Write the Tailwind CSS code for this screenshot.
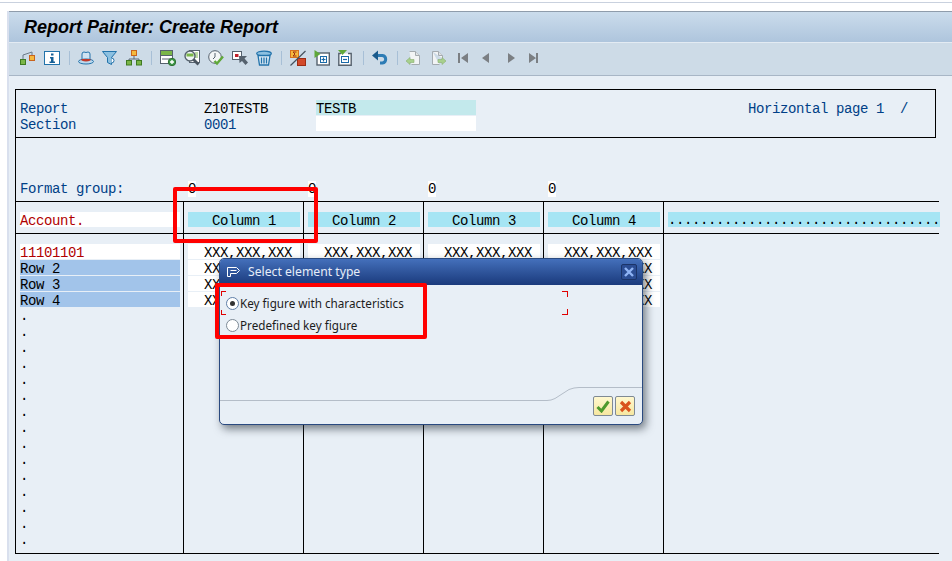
<!DOCTYPE html>
<html>
<head>
  <title>Report Painter: Create Report</title>
  <script src="https://cdn.jsdelivr.net/npm/@tailwindcss/browser@4"></script>
</head>
<body class="bg-white w-[952px] h-[561px] overflow-hidden relative font-['Liberation_Mono',monospace] text-[14px] tracking-[-0.4px] leading-[16px]">
  <!-- browser strip above the SAP window -->
  <div class="h-[11px] border-t border-[#c9d1de] mt-[2px] -mb-[2px]"></div>

  <div class="ml-[7px] h-[550px] border-l-2 border-[#d9e0ee] bg-[#e8eff6] flex flex-col">
    <!-- title bar -->
    <div class="h-[32px] border-t border-[#8f9cab] border-b border-b-[#e3ebf3] bg-gradient-to-b from-[#cbdcec] to-[#aec5dd] pl-[15px] flex items-center">
      <h1 class="font-['Liberation_Sans',sans-serif] font-bold italic text-[18px] tracking-normal text-black">Report Painter: Create Report</h1>
    </div>

    <!-- toolbar -->
    <div class="h-[33px] bg-[#cddbe7] border-b border-[#a8b6c6] pl-[11px] pb-[3px] flex items-center gap-2">
      <svg class="w-4 h-4" viewBox="0 0 16 16"><path d="M3 9V5l9-3v4" fill="none" stroke="#6b7a88"/><rect x=".5" y="9.500" width="5" height="5" fill="#7ab648" stroke="#3f7a22"/><rect x="9.500" y="5.500" width="5" height="5" fill="#f5b93c" stroke="#c8641e"/></svg>
      <svg class="w-4 h-4" viewBox="0 0 16 16"><rect x=".5" y="1.500" width="15" height="13" fill="#fff" stroke="#2273ab"/><path d="M7 3.500h2.500v2H7zM6 7h3.500v4.500H11V13H5.500v-1.500H7V8.500H6z" fill="#155f96"/></svg>
      <span class="ml-px w-px h-[14px] bg-[#a7bfd6]"></span>
      <svg class="w-4 h-4" viewBox="0 0 16 16"><path d="M4 10V4q0-2 2-2 2 1 4 0 2 0 2 2v6z" fill="#cfe3f2" stroke="#2273ab"/><ellipse cx="8" cy="11.500" rx="7.500" ry="2.500" fill="#bcd9ee" stroke="#2273ab"/><path d="M3.500 10.500q4.500 2 9 0v-1.500h-9z" fill="#c0392b"/></svg>
      <svg class="w-4 h-4" viewBox="0 0 16 16"><path d="M.5 1.500h14l-5 6v7l-4-2v-5z" fill="#8cc0e0" stroke="#2273ab"/><path d="M9.500 8a2.500 2.500 0 1 1 0 5" fill="#fff" stroke="#2273ab"/></svg>
      <svg class="w-4 h-4" viewBox="0 0 16 16"><path d="M8 6v3M3 11V9h10v2" fill="none" stroke="#5d6b78"/><rect x="5.500" y=".5" width="5" height="5" fill="#f5b93c" stroke="#c8641e"/><rect x=".5" y="10.500" width="5" height="4.500" fill="#7ab648" stroke="#3f7a22"/><rect x="10.500" y="10.500" width="5" height="4.500" fill="#7ab648" stroke="#3f7a22"/></svg>
      <span class="ml-px w-px h-[14px] bg-[#a7bfd6]"></span>
      <svg class="w-4 h-4" viewBox="0 0 16 16"><rect x=".5" y=".5" width="12" height="13" fill="#fff" stroke="#56626e"/><rect x="1" y="1" width="11" height="4" fill="#7ab648"/><path d="M1 5.500h11M2 9h8" stroke="#56626e"/><circle cx="12" cy="12" r="3.700" fill="#3f9a4a" stroke="#2f6e32"/><path d="M10 12h4M12 10v4" stroke="#fff" stroke-width="1.400"/></svg>
      <svg class="w-4 h-4" viewBox="0 0 16 16"><rect x="5.500" y=".5" width="10" height="12" fill="#fff" stroke="#56626e"/><path d="M11 3h3M11 5h3M11 7h3" stroke="#7ab648"/><circle cx="6" cy="6" r="5" fill="#eef3f5" stroke="#56626e" stroke-width="1.400"/><path d="M2.500 5h7" stroke="#7ab648" stroke-width="3"/><path d="M9.500 9.500l5 5" stroke="#4a5560" stroke-width="2.800"/></svg>
      <svg class="w-4 h-4" viewBox="0 0 16 16"><circle cx="7" cy="7" r="6.300" fill="#f4f6f7" stroke="#56626e"/><path d="M7 3v4l-2 2" fill="none" stroke="#56626e"/><path d="M6.500 11l2.500 2.500 6-7" fill="none" stroke="#5fa83a" stroke-width="2.400"/></svg>
      <svg class="w-4 h-4" viewBox="0 0 16 16"><rect x=".5" y="1.500" width="9" height="8" fill="#fff" stroke="#56626e"/><rect x="3" y="4" width="3.500" height="3" fill="#c0202a"/><path d="M7 6h8l-2.500 2.500 3.500 4-2.500 2.500-3.500-4L7.500 13z" fill="#56626e"/></svg>
      <svg class="w-4 h-4" viewBox="0 0 16 16"><ellipse cx="8" cy="3.500" rx="7.300" ry="2.300" fill="#8cc0e0" stroke="#2273ab" stroke-width="1.300"/><path d="M2 5.500l1.500 9.500h9L14 5.500z" fill="#dcebf5" stroke="#2273ab" stroke-width="1.300"/><path d="M5.500 7.500v6M8 7.500v6M10.500 7.500v6" stroke="#2273ab" stroke-width="1.300"/></svg>
      <span class="ml-px w-px h-[14px] bg-[#a7bfd6]"></span>
      <svg class="w-4 h-4" viewBox="0 0 16 16"><rect x=".5" y=".5" width="8" height="7" fill="#f5b93c" stroke="#d8701e"/><rect x="7.500" y="8.500" width="8" height="7" fill="#d2492a" stroke="#9c2c14"/><path d="M.5 15.500L15.500 1" stroke="#46525e" stroke-width="1.200"/><path d="M6.500 2H3l2 2-2 2h3.500" fill="none" stroke="#9c2c14"/></svg>
      <svg class="w-4 h-4" viewBox="0 0 16 16"><rect x="3" y="3" width="12.300" height="12" fill="#fff" stroke="#56626e" stroke-width="1.400"/><path d="M.5 0l6 4-6 4z" fill="#5fa83a"/><rect x="6.500" y="6.500" width="6" height="6" fill="#fff" stroke="#1a6aa8"/><path d="M7.500 9.500h4M9.500 7.500v4" stroke="#1a6aa8" stroke-width="1.200"/></svg>
      <svg class="w-4 h-4" viewBox="0 0 16 16"><path d="M3 3.500H.8v11.700h12.400V3.500H10" fill="#fff" stroke="#56626e" stroke-width="1.400"/><path d="M0 0h9L4.500 5z" fill="#5fa83a"/><rect x="3.500" y="6.500" width="7" height="6" fill="#fff" stroke="#1a6aa8"/><path d="M5 9.500h4" stroke="#1a6aa8" stroke-width="1.200"/></svg>
      <span class="ml-px w-px h-[14px] bg-[#a7bfd6]"></span>
      <svg class="w-4 h-4" viewBox="0 0 16 16"><path d="M4 5.500h6.500a3.800 3.800 0 0 1 0 7.500H8" fill="none" stroke="#2d7cb5" stroke-width="3"/><path d="M0 5.500L6 .5v10z" fill="#1a5a8c"/></svg>
      <span class="ml-px w-px h-[14px] bg-[#a7bfd6]"></span>
      <svg class="w-4 h-4" viewBox="0 0 16 16"><path d="M3.500 1.500h6l4 4v9h-8" fill="#f2f4f5" stroke="#a4abb0"/><path d="M9.500 1.500v4h4" fill="#dfe3e5" stroke="#a4abb0"/><path d="M0 11l4-3.500V9.500h4v3H4v2z" fill="#a8d08d" stroke="#8ab070" stroke-width=".6"/></svg>
      <svg class="w-4 h-4 ml-px" viewBox="0 0 16 16"><path d="M1.500 1.500h6l4 4v3M1.500 1.500v13h7" fill="#f2f4f5" stroke="#a4abb0"/><path d="M7.500 1.500v4h4" fill="#dfe3e5" stroke="#a4abb0"/><path d="M7 9.500h4V7.500l4 3.500-4 3.500v-2H7z" fill="#a8d08d" stroke="#8ab070" stroke-width=".6"/></svg>
      <svg class="w-4 h-4 ml-px" viewBox="0 0 16 16"><path d="M2 3h2v10H2zM12 3v10L5 8z" fill="#7b7f83"/></svg>
      <svg class="w-4 h-4" viewBox="0 0 16 16"><path d="M9 3v10L2 8z" fill="#7b7f83"/></svg>
      <svg class="w-4 h-4 ml-[2px]" viewBox="0 0 16 16"><path d="M2 3v10l7-5z" fill="#7b7f83"/></svg>
      <svg class="w-4 h-4 -ml-[2px]" viewBox="0 0 16 16"><path d="M1 3v10l7-5zM8 3h2v10H8z" fill="#7b7f83"/></svg>
    </div>

    <!-- list area: black left rule runs from the header box to the bottom line -->
    <div class="mt-[13px] ml-[6px] w-[924px] border-l border-black">
      <!-- report header box -->
      <div class="w-[920px] h-[49px] border-t border-r border-b border-black pt-[10px] pl-[4px] text-[#003f87]">
        <div class="flex h-4">
          <span class="w-[184px] pt-px">Report</span>
          <span class="w-[112px] pt-px text-black">Z10TESTB</span>
          <span class="w-[160px] h-[15px] pt-px bg-[#c3e9ec] text-black">TESTB</span>
          <span class="ml-[272px] pt-px whitespace-pre">Horizontal page 1  /</span>
        </div>
        <div class="flex h-4">
          <span class="w-[184px] pt-px">Section</span>
          <span class="w-[112px] pt-px">0001</span>
          <span class="w-[160px] h-[15px] bg-white"></span>
        </div>
      </div>

      <!-- format group -->
      <div class="h-[63px] pt-[43px] pl-[4px] flex text-[#003f87]">
        <span class="w-[168px]">Format group:</span>
        <span class="w-[120px] text-black"><span class="bg-white">0</span></span>
        <span class="w-[120px] text-black"><span class="bg-white">0</span></span>
        <span class="w-[120px] text-black"><span class="bg-white">0</span></span>
        <span class="w-[120px] text-black"><span class="bg-white">0</span></span>
      </div>

      <!-- column headers -->
      <div class="grid grid-cols-[168px_120px_120px_120px_120px_275px] h-[33px] border-t border-b border-black">
        <div class="border-r border-black pt-[10px] pl-[4px]"><div class="w-[160px] h-[15px] pt-px bg-white text-[#b00000]">Account.</div></div>
        <div class="border-r border-black pt-[10px] pl-[4px]"><div class="w-[112px] h-[15px] pt-px bg-[#a6e5f4] pl-6">Column 1</div></div>
        <div class="border-r border-black pt-[10px] pl-[4px]"><div class="w-[112px] h-[15px] pt-px bg-[#a6e5f4] pl-6">Column 2</div></div>
        <div class="border-r border-black pt-[10px] pl-[4px]"><div class="w-[112px] h-[15px] pt-px bg-[#a6e5f4] pl-6">Column 3</div></div>
        <div class="border-r border-black pt-[10px] pl-[4px]"><div class="w-[112px] h-[15px] pt-px bg-[#a6e5f4] pl-6">Column 4</div></div>
        <div class="pt-[10px] pl-[4px]"><div class="w-[272px] h-[15px] bg-[#a6e5f4] whitespace-nowrap">..................................</div></div>
      </div>

      <!-- rows -->
      <div class="grid grid-cols-[168px_120px_120px_120px_120px_275px] h-[320px] border-b border-black">
        <div class="border-r border-black pt-[10px] pl-[4px]">
          <div class="w-[160px] h-[15px] pt-px mb-px bg-white text-[#b00000]">11101101</div>
          <div class="w-[160px] h-[15px] pt-px mb-px bg-[#a2c4ea]">Row 2</div>
          <div class="w-[160px] h-[15px] pt-px mb-px bg-[#a2c4ea]">Row 3</div>
          <div class="w-[160px] h-[15px] pt-px mb-px bg-[#a2c4ea]">Row 4</div>
          <div>.</div><div>.</div><div>.</div><div>.</div><div>.</div>
          <div>.</div><div>.</div><div>.</div><div>.</div><div>.</div>
          <div>.</div><div>.</div><div>.</div><div>.</div><div>.</div>
        </div>
        <div class="border-r border-black pt-[10px] pl-[4px]">
          <div class="w-[112px] h-[15px] pt-px mb-px bg-white pl-4">XXX,XXX,XXX</div>
          <div class="w-[112px] h-[15px] pt-px mb-px bg-white pl-4">XXX,XXX,XXX</div>
          <div class="w-[112px] h-[15px] pt-px mb-px bg-white pl-4">XXX,XXX,XXX</div>
          <div class="w-[112px] h-[15px] pt-px mb-px bg-white pl-4">XXX,XXX,XXX</div>
        </div>
        <div class="border-r border-black pt-[10px] pl-[4px]">
          <div class="w-[112px] h-[15px] pt-px mb-px bg-white pl-4">XXX,XXX,XXX</div>
          <div class="w-[112px] h-[15px] pt-px mb-px bg-white pl-4">XXX,XXX,XXX</div>
          <div class="w-[112px] h-[15px] pt-px mb-px bg-white pl-4">XXX,XXX,XXX</div>
          <div class="w-[112px] h-[15px] pt-px mb-px bg-white pl-4">XXX,XXX,XXX</div>
        </div>
        <div class="border-r border-black pt-[10px] pl-[4px]">
          <div class="w-[112px] h-[15px] pt-px mb-px bg-white pl-4">XXX,XXX,XXX</div>
          <div class="w-[112px] h-[15px] pt-px mb-px bg-white pl-4">XXX,XXX,XXX</div>
          <div class="w-[112px] h-[15px] pt-px mb-px bg-white pl-4">XXX,XXX,XXX</div>
          <div class="w-[112px] h-[15px] pt-px mb-px bg-white pl-4">XXX,XXX,XXX</div>
        </div>
        <div class="border-r border-black pt-[10px] pl-[4px]">
          <div class="w-[112px] h-[15px] pt-px mb-px bg-white pl-4">XXX,XXX,XXX</div>
          <div class="w-[112px] h-[15px] pt-px mb-px bg-white pl-4">XXX,XXX,XXX</div>
          <div class="w-[112px] h-[15px] pt-px mb-px bg-white pl-4">XXX,XXX,XXX</div>
          <div class="w-[112px] h-[15px] pt-px mb-px bg-white pl-4">XXX,XXX,XXX</div>
        </div>
        <div></div>
      </div>
    </div>
  </div>

  <!-- dialog -->
  <div class="absolute left-[219px] top-[258px] w-[424px] h-[167px] rounded-[5px] border border-[#2a4a80] bg-[#e8eff6] shadow-[3px_4px_8px_rgba(40,50,60,0.6)] flex flex-col font-['Noto_Sans',sans-serif] text-[11.7px] tracking-normal">
    <div class="h-[26px] rounded-t-[4px] bg-gradient-to-b from-[#4470bb] to-[#1b3a7c] flex items-center pl-[6px] text-white text-[12.2px]">
      <svg class="w-[15px] h-[12px]" viewBox="0 0 15 12"><path d="M1.500 1.500h9l3 3-3 3H4.500v3h-3z M4.500 4.500h6" fill="none" stroke="#fff"/></svg>
      <span class="ml-[7px] text-[#e6edf8]">Select element type</span>
      <span class="ml-auto mr-[5px] w-[16px] h-[16px] rounded-[2px] bg-[#2b4d93] border border-[#1b3468] flex items-center justify-center">
        <svg class="w-[10px] h-[10px]" viewBox="0 0 10 10"><path d="M1 1l8 8M9 1l-8 8" stroke="#8fb4f5" stroke-width="2.400"/></svg>
      </span>
    </div>
    <div class="pt-[12px] pl-[6px] text-[#1c1c1c] flex flex-col gap-[9px]">
      <label class="flex items-center h-[13px]">
        <span class="w-[13px] h-[13px] rounded-full border border-[#5f7fa8] bg-white flex items-center justify-center"><span class="w-[5px] h-[5px] rounded-full bg-[#333]"></span></span>
        <span class="ml-px -mt-[2px]">Key figure with characteristics</span>
      </label>
      <label class="flex items-center h-[13px]">
        <span class="w-[13px] h-[13px] rounded-full border border-[#7d8a96] bg-white"></span>
        <span class="ml-px -mt-[2px]">Predefined key figure</span>
      </label>
    </div>
    <!-- red frame corners of the group -->
    <span class="absolute left-[1px] top-[32px] w-[5px] h-[5px] border-l border-t border-[#e00000]"></span>
    <span class="absolute left-[1px] top-[51px] w-[5px] h-[5px] border-l border-b border-[#e00000]"></span>
    <span class="absolute left-[342px] top-[32px] w-[6px] h-[6px] border-r border-t border-[#e00000]"></span>
    <span class="absolute left-[342px] top-[50px] w-[6px] h-[6px] border-r border-b border-[#e00000]"></span>
    <!-- footer curve -->
    <svg class="absolute left-0 top-[125px] w-[422px] h-[18px]" viewBox="0 0 422 18"><path d="M0 16.500H327q4 0 8-2l14-9q5-2 10-2H422" fill="none" stroke="#b4bdc8"/></svg>
    <div class="absolute left-[373px] top-[137px] flex gap-[2px]">
      <button class="w-[20px] h-[20px] rounded-[2px] border border-[#7f8a94] bg-gradient-to-b from-[#fff8cf] to-[#f6e7a0] flex items-center justify-center">
        <svg class="w-[14px] h-[13px]" viewBox="0 0 14 13"><path d="M1.500 7l4 4 7-9.500" fill="none" stroke="#4f9a2e" stroke-width="3"/></svg>
      </button>
      <button class="w-[20px] h-[20px] rounded-[2px] border border-[#7f8a94] bg-gradient-to-b from-[#fff8cf] to-[#f6e7a0] flex items-center justify-center">
        <svg class="w-[13px] h-[13px]" viewBox="0 0 13 13"><path d="M2 2l9 9M11 2l-9 9" stroke="#d9541e" stroke-width="3.200"/></svg>
      </button>
    </div>
  </div>

  <!-- red annotation frames over the screenshot -->
  <div class="absolute left-[173px] top-[187px] w-[145px] h-[56px] border-4 border-[#ff0000] rounded-[2px]"></div>
  <div class="absolute left-[215px] top-[283px] w-[212px] h-[56px] border-4 border-[#ff0000] rounded-[2px]"></div>
</body>
</html>
